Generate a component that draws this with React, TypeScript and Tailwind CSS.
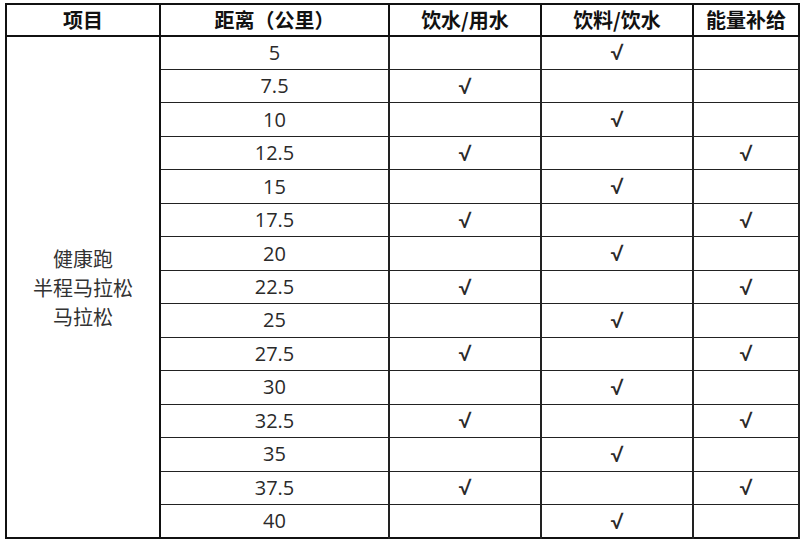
import React from "react";

const rows: [string, boolean, boolean, boolean][] = [
  ["5", false, true, false],
  ["7.5", true, false, false],
  ["10", false, true, false],
  ["12.5", true, false, true],
  ["15", false, true, false],
  ["17.5", true, false, true],
  ["20", false, true, false],
  ["22.5", true, false, true],
  ["25", false, true, false],
  ["27.5", true, false, true],
  ["30", false, true, false],
  ["32.5", true, false, true],
  ["35", false, true, false],
  ["37.5", true, false, true],
  ["40", false, true, false],
];

const cjk = { fontFamily: '"Noto Sans CJK SC", "Noto Sans", sans-serif' };
const num = { fontFamily: '"Open Sans", "Noto Sans CJK SC", sans-serif' };
const chk = { fontFamily: 'Roboto, "Noto Sans", sans-serif' };

function Mark({ on }: { on: boolean }) {
  return (
    <td className="border border-[#222] border-x-2 p-0 text-center text-[23px] leading-none text-[#2a2a2a]" style={chk}>
      {on ? "√" : ""}
    </td>
  );
}

export default function App() {
  return (
    <div className="w-[800px] h-[540px] bg-white pl-[5px] pt-[3px]" style={cjk}>
      <table className="border-collapse border-2 border-[#111] text-[#222] table-fixed">
        <colgroup>
          <col className="w-[154px]" />
          <col className="w-[229px]" />
          <col className="w-[152px]" />
          <col className="w-[152px]" />
          <col className="w-[106px]" />
        </colgroup>
        <thead>
          <tr className="h-[32px]">
            {["项目", "距离（公里）", "饮水/用水", "饮料/饮水", "能量补给"].map((h) => (
              <th
                key={h}
                className="border-2 border-[#111] p-0 text-[20px] font-bold text-[#111] leading-none text-center"
              >
                {h}
              </th>
            ))}
          </tr>
        </thead>
        <tbody>
          {rows.map(([d, a, b, c], i) => (
            <tr key={d} className="h-[33.47px]">
              {i === 0 && (
                <td
                  rowSpan={15}
                  className="border-2 border-[#111] p-0 text-center text-[20px] leading-[29px] text-[#333]"
                >
                  健康跑
                  <br />
                  半程马拉松
                  <br />
                  马拉松
                </td>
              )}
              <td
                className="border border-[#222] border-x-2 p-0 text-center text-[20px] leading-none text-[#2a2a2a]"
                style={num}
              >
                {d}
              </td>
              <Mark on={a} />
              <Mark on={b} />
              <Mark on={c} />
            </tr>
          ))}
        </tbody>
      </table>
    </div>
  );
}
